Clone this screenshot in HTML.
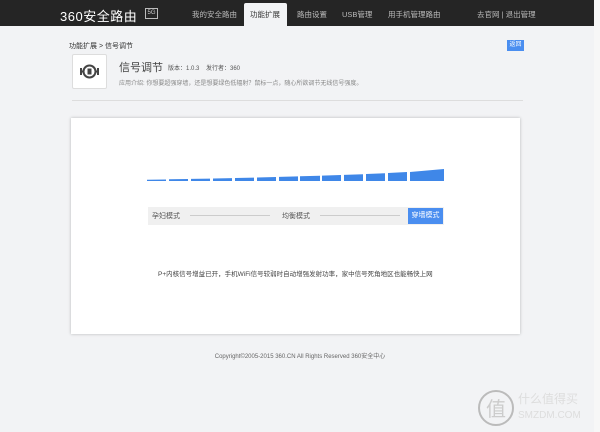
<!DOCTYPE html>
<html><head><meta charset="utf-8"><style>
*{margin:0;padding:0;box-sizing:border-box}
body{width:600px;height:432px;overflow:hidden;background:#f2f3f5;font-family:"Liberation Sans","Noto Sans CJK SC",sans-serif;position:relative;color:#333}
.top{position:absolute;left:0;top:0;width:600px;height:26px;background:#252525}
.abs{position:absolute;white-space:nowrap}
.nav{color:#bbb;font-size:7.5px;top:9px}
.tab{position:absolute;left:244px;top:3px;width:43px;height:23px;background:#f2f3f5;border-radius:2px 2px 0 0}
.card{position:absolute;left:71px;top:118px;width:449px;height:216px;background:#fff;box-shadow:0 0 3px rgba(0,0,0,.25)}
</style></head><body>
<div class="top"></div>
<div class="abs" style="left:60px;top:6px;color:#fff;font-size:13px;letter-spacing:0.5px">360安全路由</div>
<div class="abs" style="left:145px;top:8px;width:13px;height:11px;border:1px solid #bbb;color:#ccc;font-size:6px;text-align:center;line-height:9px">5G</div>
<div class="abs nav" style="left:192px">我的安全路由</div>
<div class="tab"></div>
<div class="abs nav" style="left:250px;color:#333">功能扩展</div>
<div class="abs nav" style="left:297px">路由设置</div>
<div class="abs nav" style="left:342px">USB管理</div>
<div class="abs nav" style="left:388px">用手机管理路由</div>
<div class="abs nav" style="left:477px">去官网 | 退出管理</div>
<div class="abs" style="left:69px;top:41px;font-size:7px;color:#333">功能扩展 &gt; 信号调节</div>
<div class="abs" style="left:507px;top:40px;width:17px;height:11px;background:#4a8ef0;color:#fff;font-size:6px;text-align:center;line-height:11px">返回</div>
<div class="abs" style="left:72px;top:54px;width:35px;height:35px;background:#fff;border:1px solid #ddd;border-radius:2px">
<svg width="33" height="33" viewBox="0 0 33 33"><circle cx="16.5" cy="16.5" r="6" fill="none" stroke="#444" stroke-width="2"/><rect x="14.5" y="13.5" width="4" height="6" fill="#444"/><path d="M8 13v7M25 13v7M8 16.5h2M23 16.5h2" stroke="#444" stroke-width="2"/></svg></div>
<div class="abs" style="left:119px;top:59px;font-size:11px;color:#444">信号调节</div>
<div class="abs" style="left:168px;top:63px;font-size:6px;color:#555">版本：1.0.3 &nbsp;&nbsp; 发行者：360</div>
<div class="abs" style="left:119px;top:78px;font-size:6px;color:#888">应用介绍: 你想要超强穿墙，还是想要绿色低辐射？鼠标一点，随心所欲调节无线信号强度。</div>
<div class="abs" style="left:72px;top:100px;width:451px;height:1px;background:#ddd"></div>
<div class="card"></div>
<svg class="abs" style="left:0;top:0" width="600" height="432">
<g fill="#3f87e8">
<polygon points="147,181 166,181 166,179.5 147,179.8"/>
<polygon points="169,181 188,181 188,179 169,179.3"/>
<polygon points="191,181 210,181 210,178.6 191,178.9"/>
<polygon points="213,181 232,181 232,178.1 213,178.5"/>
<polygon points="235,181 254,181 254,177.6 235,178"/>
<polygon points="257,181 276,181 276,177 257,177.5"/>
<polygon points="279,181 298,181 298,176.4 279,176.9"/>
<polygon points="300,181 320,181 320,175.7 300,176.3"/>
<polygon points="322,181 341,181 341,175 322,175.6"/>
<polygon points="344,181 363,181 363,174.2 344,174.9"/>
<polygon points="366,181 385,181 385,173.2 366,174"/>
<polygon points="388,181 407,181 407,172 388,173"/>
<polygon points="410,181 444,181 444,169 410,172"/>
</g></svg>
<div class="abs" style="left:148px;top:207px;width:296px;height:18px;background:#f0f0f0"></div>
<div class="abs" style="left:152px;top:211px;font-size:7px;color:#555">孕妇模式</div>
<div class="abs" style="left:190px;top:215px;width:80px;height:1px;background:#ccc"></div>
<div class="abs" style="left:282px;top:211px;font-size:7px;color:#555">均衡模式</div>
<div class="abs" style="left:320px;top:215px;width:80px;height:1px;background:#ccc"></div>
<div class="abs" style="left:408px;top:208px;width:35px;height:16px;background:#4a8ef0;color:#fff;font-size:7px;text-align:center;line-height:16px">穿墙模式</div>
<div class="abs" style="left:158px;top:268px;font-size:6.5px;color:#444">P+内核信号增益已开，手机WiFi信号较弱时自动增强发射功率，家中信号死角地区也能畅快上网</div>
<div class="abs" style="left:0;top:351px;width:600px;text-align:center;font-size:6px;color:#666">Copyright©2005-2015 360.CN All Rights Reserved 360安全中心</div>
<div class="abs" style="left:594px;top:0;width:6px;height:432px;background:#f7f7f7"></div>
<svg class="abs" style="left:477px;top:388px" width="40" height="40"><circle cx="19" cy="20" r="17" fill="none" stroke="#bbb" stroke-width="2"/><text x="19" y="28" font-size="20" text-anchor="middle" fill="#ccc" font-family="Noto Sans CJK SC">值</text></svg>
<div class="abs" style="left:518px;top:390px;font-size:12px;color:#ddd">什么值得买</div>
<div class="abs" style="left:518px;top:410px;font-size:10px;color:#ddd">SMZDM.COM</div>
</body></html>
